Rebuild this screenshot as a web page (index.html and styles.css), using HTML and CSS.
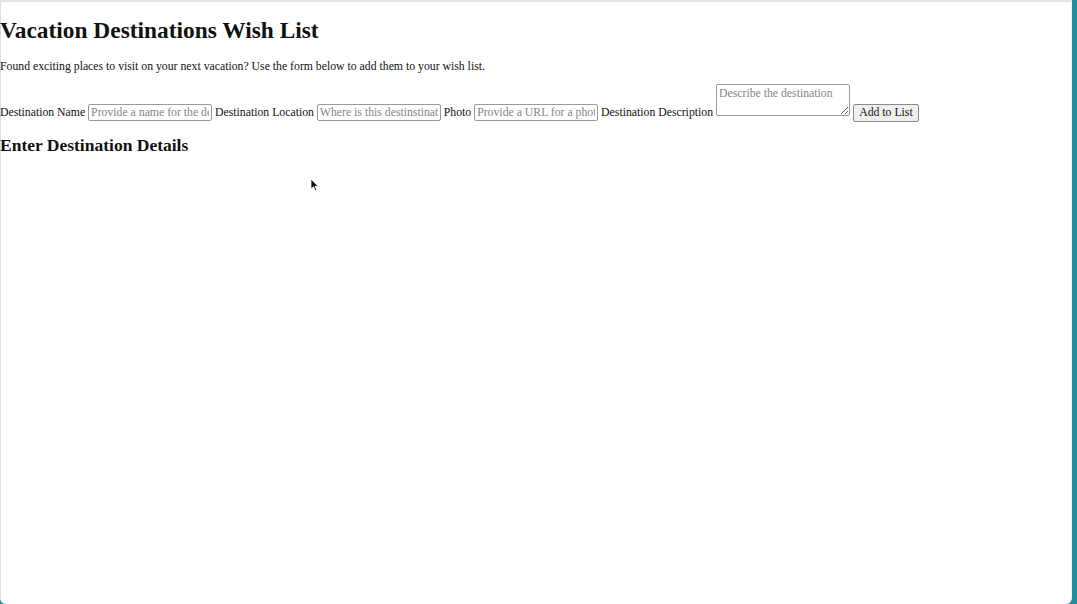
FILE: index.html
```html
<!DOCTYPE html>
<html lang="en">
<head>
<meta charset="utf-8">
<title>Vacation Destinations Wish List</title>
<link rel="stylesheet" href="styles.css">
</head>
<body>
<div class="screen">
  <div class="page">
    <h1 class="title">Vacation Destinations Wish List</h1>
    <p class="intro">Found exciting places to visit on your next vacation? Use the form below to add them to your wish list.</p>
    <form class="dest-form">
      <label class="lbl" for="name">Destination Name</label>
      <input class="field" id="name" type="text" placeholder="Provide a name for the destination">
      <label class="lbl" for="loc">Destination Location</label>
      <input class="field" id="loc" type="text" placeholder="Where is this destinstination?">
      <label class="lbl" for="photo">Photo</label>
      <input class="field" id="photo" type="text" placeholder="Provide a URL for a photo">
      <label class="lbl" for="desc">Destination Description</label>
      <textarea class="area" id="desc" placeholder="Describe the destination"></textarea>
      <button class="btn" type="button">Add to List</button>
    </form>
    <h2 class="subtitle">Enter Destination Details</h2>
    <svg class="cursor" width="10" height="14" viewBox="0 0 10 14"><path d="M1 1 L1 11 L3.5 8.8 L5.3 12.8 L6.8 12.1 L5 8.2 L8.2 8.2 Z" fill="#111" stroke="#fff" stroke-width="0.8"/></svg>
  </div>
</div>
</body>
</html>
```
FILE: styles.css
```css
html, body {
  margin: 0;
  padding: 0;
}
body {
  background: #1f8f9b;
}
.screen {
  width: 1077px;
  height: 604px;
  background: #1f8f9b;
  overflow: hidden;
}
.page {
  position: relative;
  box-sizing: border-box;
  width: 1072px;
  height: 604px;
  background: #ffffff;
  border-top: 2px solid #e4e4e4;
  border-right: 1px solid #e8f2f2;
  box-shadow: inset 1px 0 0 #cfe2ec;
  border-bottom-left-radius: 6px;
  border-bottom-right-radius: 6px;
  font-family: "Liberation Serif", "Times New Roman", serif;
  color: #111;
  font-size: 11.75px;
}
.title {
  font-size: 23.4px;
  font-weight: bold;
  margin: 14px 0 0 0;
  line-height: 28px;
}
.intro {
  margin: 16px 0 0 0;
  font-size: 11.75px;
  line-height: 14px;
}
.dest-form {
  margin: 10px 0 0 0;
  font-size: 11.75px;
}
.lbl {
  font-size: 11.75px;
}
.field {
  box-sizing: border-box;
  width: 124px;
  height: 17px;
  margin: 0;
  padding: 0 2px;
  border: 1px solid #9a9a9a;
  border-radius: 2px;
  font-family: "Liberation Serif", "Times New Roman", serif;
  font-size: 11.75px;
  color: #111;
}
.field::placeholder,
.area::placeholder {
  color: #858585;
}
.area {
  box-sizing: border-box;
  width: 134px;
  height: 32px;
  margin: 0;
  padding: 2px 2px 0;
  border: 1px solid #9a9a9a;
  border-radius: 2px;
  font-family: "Liberation Serif", "Times New Roman", serif;
  font-size: 11.75px;
  vertical-align: baseline;
}
.btn {
  box-sizing: border-box;
  width: 66px;
  height: 18px;
  margin: 0;
  padding: 0 4px;
  border: 1px solid #8a8a8a;
  border-radius: 2px;
  background: #efefef;
  font-family: "Liberation Serif", "Times New Roman", serif;
  font-size: 11.75px;
  color: #111;
}
.subtitle {
  font-size: 17.5px;
  font-weight: bold;
  margin: 13px 0 0 0;
  line-height: 21px;
}
.cursor {
  position: absolute;
  left: 310px;
  top: 176px;
}
```
